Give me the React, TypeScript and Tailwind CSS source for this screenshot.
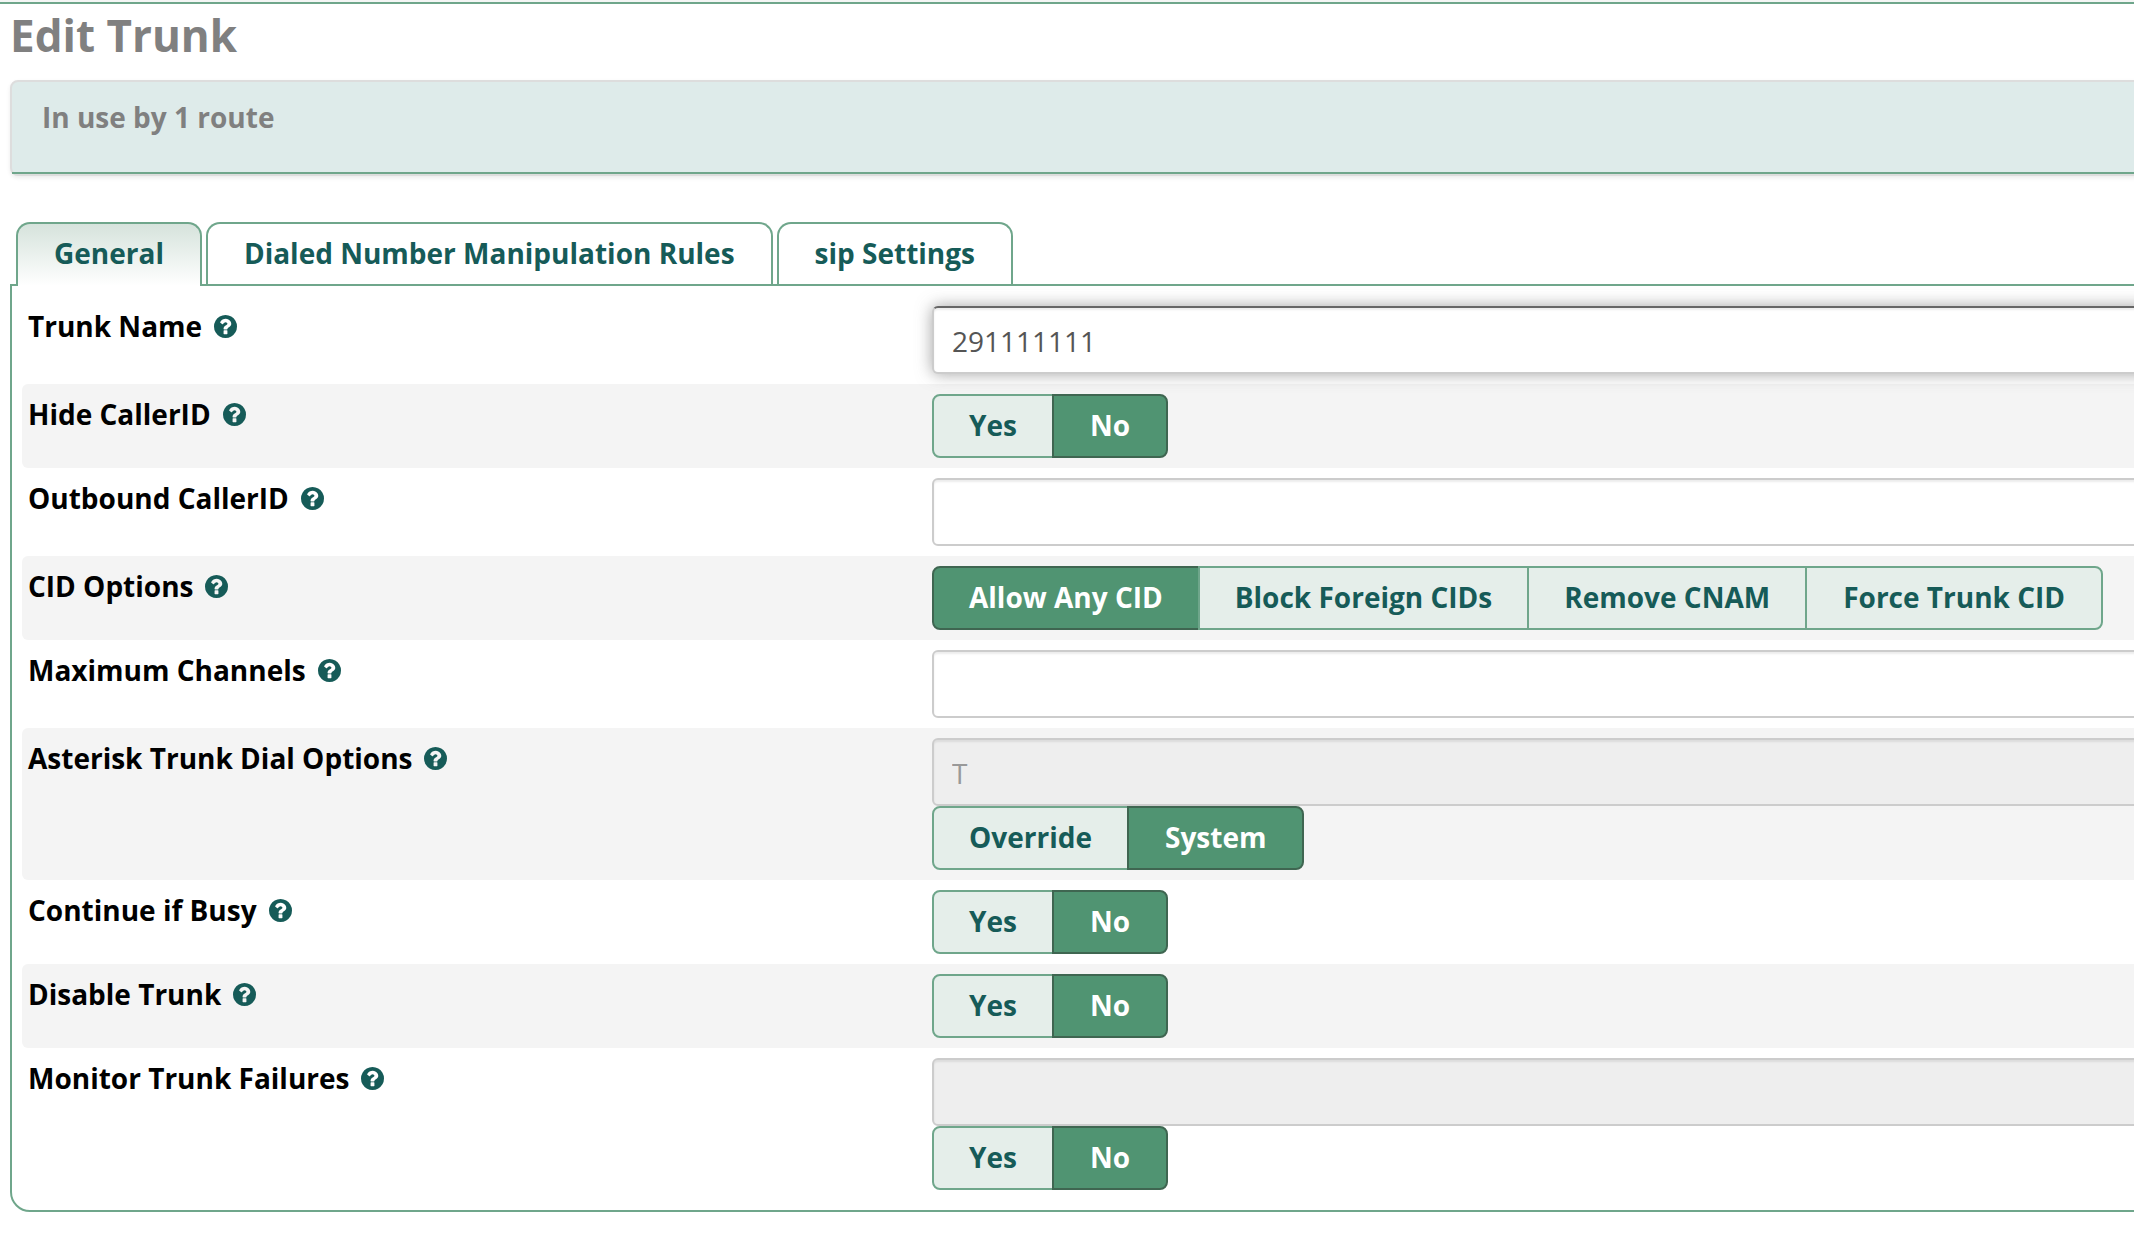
import { useState } from "react";
import type { ReactNode } from "react";

function HelpIcon() {
  return (
    <svg viewBox="128 128 1536 1536" className="h-[23px] w-[23px] shrink-0 fill-[#165b58]" aria-hidden="true">
      <path d="M1024 1376v-192q0-14-9-23t-23-9h-192q-14 0-23 9t-9 23v192q0 14 9 23t23 9h192q14 0 23-9t9-23zm256-672q0-88-55.5-163t-138.5-116-170-41q-243 0-371 213-15 24 8 42l132 100q7 6 19 6 16 0 25-12 53-68 86-92 34-24 86-24 48 0 85.5 26t37.5 59q0 38-20 61t-68 45q-63 28-115.5 86.5t-52.5 125.5v36q0 14 9 23t23 9h192q14 0 23-9t9-23q0-19 21.5-49.5t54.5-49.5q32-18 49-28.5t46-35 44.5-48 28-60.5 12.5-81zm384 192q0 209-103 385.5t-279.5 279.5-385.5 103-385.5-103-279.5-279.5-103-385.5 103-385.5 279.5-279.5 385.5-103 385.5 103 279.5 279.5 103 385.5z" />
    </svg>
  );
}

function Row({ label, htmlFor, shaded, children }: { label: string; htmlFor?: string; shaded?: boolean; children: ReactNode }) {
  return (
    <div
      className={
        "grid grid-cols-[minmax(0,5fr)_minmax(0,7fr)] items-start rounded-[6px] py-[10px] " +
        (shaded ? "bg-[#f4f4f4]" : "")
      }
    >
      <div className="flex items-center gap-3 pl-[6px] font-bold leading-[40px] text-black">
        {htmlFor ? <label htmlFor={htmlFor}>{label}</label> : <span>{label}</span>}
        <HelpIcon />
      </div>
      <div>{children}</div>
    </div>
  );
}

function TextField({ id, value, disabled, focused }: { id: string; value?: string; disabled?: boolean; focused?: boolean }) {
  return (
    <input
      id={id}
      type="text"
      defaultValue={value}
      disabled={disabled}
      className={
        "block h-[68px] w-full rounded-[6px] border-2 px-[18px] pt-[2px] outline-none " +
        (focused
          ? "border-[#ccc] border-t-[#666] bg-white text-[#555] shadow-[inset_0_2px_2px_rgba(0,0,0,0.075),0_0_16px_rgba(102,102,102,0.6)]"
          : disabled
            ? "border-[#ccc] bg-[#eee] text-[#999] shadow-[inset_0_2px_2px_rgba(0,0,0,0.075)]"
            : "border-[#ccc] bg-white text-[#555] shadow-[inset_0_2px_2px_rgba(0,0,0,0.075)]")
      }
    />
  );
}

function Choice({ name, label, options, initial }: { name: string; label: string; options: string[]; initial: string }) {
  const [selected, setSelected] = useState(initial);
  return (
    <div role="radiogroup" aria-label={label} className="flex w-max pl-[2px]">
      {options.map((option) => (
        <label
          key={option}
          className="-ml-[2px] h-16 cursor-pointer border-2 border-[#6fa68b] bg-[#e5eeea] px-[35px] pt-[10px] font-bold leading-[38px] whitespace-nowrap text-[#165b58] first:rounded-l-[8px] last:rounded-r-[8px] last:px-[36px] has-checked:border-[#3f6651] has-checked:bg-[#509472] has-checked:text-white"
        >
          <input
            type="radio"
            name={name}
            value={option}
            checked={selected === option}
            onChange={() => setSelected(option)}
            className="sr-only"
          />
          {option}
        </label>
      ))}
    </div>
  );
}

const tabs = ["General", "Dialed Number Manipulation Rules", "sip Settings"];

export default function App() {
  return (
    <div className="overflow-x-clip bg-white pb-[22px] font-['Open_Sans',sans-serif] text-[28px] leading-[38px]">
      <div className="h-1 border-b-2 border-[#6fa68b] bg-[#f4f6f5]" />
      <main className="-mr-[84px] pl-[10px]">
        <h1 className="text-[44px] leading-[62px] font-bold text-[#808080]">Edit Trunk</h1>

        <section className="mt-[14px] rounded-[8px] border-2 border-[#ddd] bg-[#deebea] shadow-[0_2px_4px_rgba(0,0,0,0.08)]">
          <p className="border-b-2 border-[#6fa68b] px-[30px] pt-4 pb-9 font-bold text-[#808080]">In use by 1 route</p>
        </section>

        <div role="tablist" className="relative mt-[46px] flex gap-1 pl-[6px]">
          {tabs.map((tab, i) => (
            <button
              key={tab}
              type="button"
              role="tab"
              aria-selected={i === 0}
              className={
                "rounded-t-[14px] border-2 border-b-0 border-[#6fa68b] px-[36px] pt-[10px] font-bold text-[#165b58] " +
                (i === 0 ? "-mb-[2px] bg-linear-to-b from-[#d6e3dc] to-white pb-[14px]" : "bg-white pb-3")
              }
            >
              {tab}
            </button>
          ))}
        </div>

        <form className="rounded-b-[20px] border-2 border-[#6fa68b] p-[10px]">
          <Row label="Trunk Name" htmlFor="trunk-name">
            <TextField id="trunk-name" value="291111111" focused />
          </Row>
          <Row label="Hide CallerID" shaded>
            <Choice name="hide-cid" label="Hide CallerID" options={["Yes", "No"]} initial="No" />
          </Row>
          <Row label="Outbound CallerID" htmlFor="outbound-cid">
            <TextField id="outbound-cid" />
          </Row>
          <Row label="CID Options" shaded>
            <Choice
              name="cid-options"
              label="CID Options"
              options={["Allow Any CID", "Block Foreign CIDs", "Remove CNAM", "Force Trunk CID"]}
              initial="Allow Any CID"
            />
          </Row>
          <Row label="Maximum Channels" htmlFor="max-channels">
            <TextField id="max-channels" />
          </Row>
          <Row label="Asterisk Trunk Dial Options" htmlFor="dial-options" shaded>
            <TextField id="dial-options" value="T" disabled />
            <Choice name="dial-source" label="Asterisk Trunk Dial Options" options={["Override", "System"]} initial="System" />
          </Row>
          <Row label="Continue if Busy">
            <Choice name="continue-busy" label="Continue if Busy" options={["Yes", "No"]} initial="No" />
          </Row>
          <Row label="Disable Trunk" shaded>
            <Choice name="disable-trunk" label="Disable Trunk" options={["Yes", "No"]} initial="No" />
          </Row>
          <Row label="Monitor Trunk Failures" htmlFor="monitor-failures">
            <TextField id="monitor-failures" disabled />
            <Choice name="monitor" label="Monitor Trunk Failures" options={["Yes", "No"]} initial="No" />
          </Row>
        </form>
      </main>
    </div>
  );
}
